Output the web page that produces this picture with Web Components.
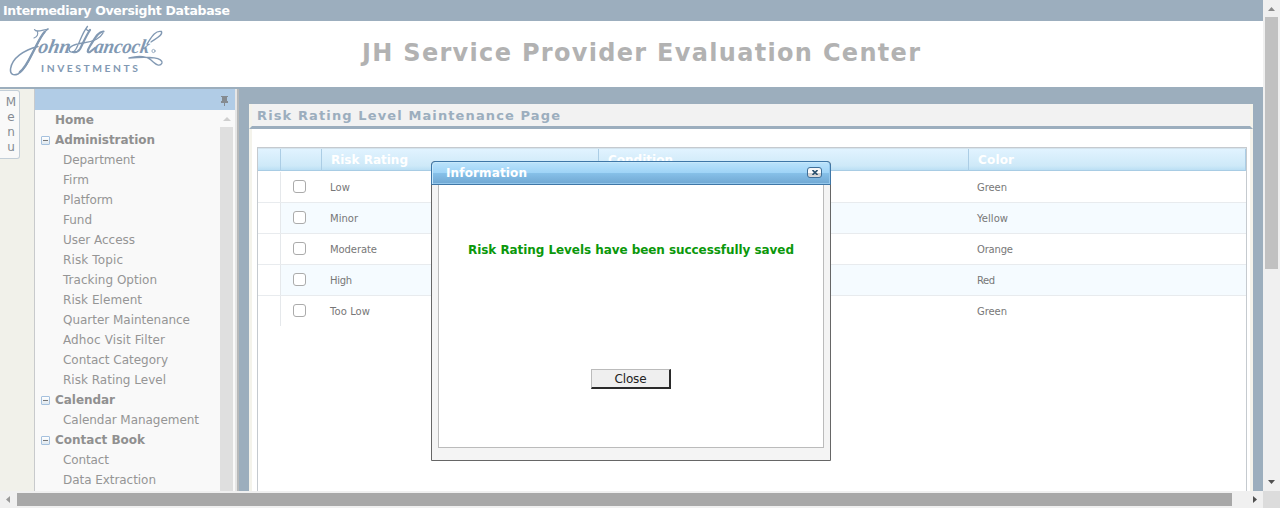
<!DOCTYPE html>
<html lang="en"><head><meta charset="utf-8"><title>Intermediary Oversight Database</title>
<style>html,body{margin:0;height:100%;overflow:hidden;background:#fff;font-family:"DejaVu Sans",sans-serif}</style></head>
<body><oversight-app></oversight-app>
<script>
const define=(name,html,setup)=>customElements.define(name,class extends HTMLElement{
  connectedCallback(){
    if(this.shadowRoot)return;
    const t=document.createElement('template');
    t.innerHTML=typeof html==='function'?html(this):html;
    this.attachShadow({mode:'open'}).append(t.content.cloneNode(true));
    if(setup)setup(this);
  }
});

/* Text spread over a given width by letter spacing */
define('fit-text','<style>:host{display:inline-block;white-space:nowrap}span{display:inline-block}</style><span><slot></slot></span>',el=>{
  const s=el.shadowRoot.querySelector('span'),w=+el.getAttribute('w'),n=el.textContent.length;
  if(w)s.style.letterSpacing=((w-s.getBoundingClientRect().width)/(n-1))+'px';
});

define('brand-logo',`<style>:host{display:block;width:156px;height:54px}svg{display:block;overflow:visible}</style>
<svg width="156" height="54" viewBox="8 24 156 54" fill="none" stroke="#8299b3" stroke-linecap="round" stroke-linejoin="round">
<g fill="#8299b3" stroke="none" font-family="Liberation Serif,serif" font-style="italic" font-weight="bold" font-size="20">
<text transform="translate(37.500 52.500) skewX(-10)" textLength="32" lengthAdjust="spacingAndGlyphs">ohn</text>
<text transform="translate(93.500 52.500) skewX(-10)" textLength="55" lengthAdjust="spacingAndGlyphs">ancock</text>
<text x="41" y="71.800" font-family="Lato,sans-serif" font-style="normal" font-weight="700" font-size="10.300" textLength="97">INVESTMENTS</text></g>
<path d="M34.500 29.500C36 33 42 30 48 29M37 31c2 3 0 6-3 7" stroke-width="1.200"/>
<path d="M48 29C42 33 39 41 35 48 29 60 25 70 18 74 13 76 10 74 10.500 69 12 58 24 50 38 46.500" stroke-width="1.500"/>
<path d="M44.500 32C40 37 36 47 32 54 28 62 24 69 20 72" stroke-width="2.400"/>
<path d="M87.500 26.500C85 28 87 32 90 30M87.500 26.500C82 33 80 42 76 49 74 53 70 53 69 50 69 46 76 44 83 43 91 42 100 39 103 33" stroke-width="1.300"/>
<path d="M90 30C86 36 83 43 80 49 78 52 75 52.500 73 52" stroke-width="2.200"/>
<path d="M103.500 31.500C98 31 94 40 90 46 87 51 87 53 90 52L95 48" stroke-width="2.200"/>
<path d="M161.500 31.500C155 30 151 38 147 44M161.500 31.500C163 35 157 38 151 42" stroke-width="1.300"/>
<path d="M129 58C138 55.500 146 56 151 60 156 65 160 67 162 63 163 58 151 56 129 58" stroke-width="1.400"/>
<circle cx="153.500" cy="51" r="1.600" stroke-width=".8"/></svg>`);

define('page-header',`<style>:host{display:block;height:89px;background:#fff;box-sizing:border-box;border-bottom:2px solid #9caebd}
.top{height:21px;background:#9caebe;color:#fff;font:bold 12.5px/21px "DejaVu Sans",sans-serif;padding-left:3px}
.row{display:flex;height:66px}brand-logo{margin:3px 0 0 8px}
h1{font:bold 24px/64px "DejaVu Sans",sans-serif;color:#b2b2b2;margin:0 0 0 198px;padding:0}</style>
<div class="top"><fit-text w="227">Intermediary Oversight Database</fit-text></div>
<div class="row"><brand-logo></brand-logo><h1><fit-text w="558">JH Service Provider Evaluation Center</fit-text></h1></div>`);

define('tree-item',el=>`<style>:host{display:flex;align-items:center;height:20px;padding-left:28px;color:#959595;font-size:12px;line-height:18px;box-sizing:border-box}
:host([head]){font-weight:bold;padding-left:6px;color:#909090}fit-text{height:20px}
i{width:9px;height:9px;box-sizing:border-box;border:1px solid #a5c1de;border-radius:1px;margin:1px 5px 0 0;background:linear-gradient(#fff,#dfe8ef);display:flex;align-items:center;justify-content:center}
i::before{content:"";width:5px;height:1px;background:#777}:host([plain]) i{visibility:hidden}</style>
${el.hasAttribute('head')?'<i></i>':''}<slot></slot>`);

const items=[['Home',39,'head plain'],['Administration',100,'head'],['Department',72],['Firm',26],['Platform',50],['Fund',29],['User Access',72],['Risk Topic',60],['Tracking Option',94],['Risk Element',79],['Quarter Maintenance',127],['Adhoc Visit Filter',102],['Contact Category',105],['Risk Rating Level',103],['Calendar',60,'head'],['Calendar Management',136],['Contact Book',90,'head'],['Contact',46],['Data Extraction',93]];
define('side-panel',`<style>:host{display:flex;width:239px;height:100%}
.tabs{width:34px;background:#f1f1ea;border-right:1px solid #c8cacc}
.tab{width:20px;height:69px;box-sizing:border-box;border:1px solid #c3ced8;border-left:0;border-radius:0 3px 3px 0;background:#f9f9f9;color:#848a92;font-size:12px;line-height:15px;text-align:center;padding:4px 0 0 3px;margin-top:1px}
.tab span{display:block}.panel{width:200px;background:#f9f9f9;overflow:hidden}
.bar{height:21px;background:#b1cce6;display:flex;justify-content:flex-end}.bar svg{margin:7px 7px 0 0}
.body{display:flex;height:calc(100% - 21px)}nav{width:185px}
.scroll{width:13px;background:#f9f9f9;display:flex;flex-direction:column;align-items:center}
.scroll svg{margin:7px 0 6px}.thumb{width:13px;flex:1;background:#dfdfdf}
.edge{width:2px;background:#e6e6e6}.edge2{width:2px;background:#b7b9ba}</style>
<div class="tabs"><div class="tab"><span>M</span><span>e</span><span>n</span><span>u</span></div></div>
<div class="panel"><div class="bar"><svg width="7" height="10"><path d="M0 0h7v1H6v4h1v2H4v3H3V7H0V5h1V1H0z" fill="#858b91"/></svg></div>
<div class="body"><nav>${items.map(([t,w,a=''])=>`<tree-item ${a}><fit-text w="${w}">${t}</fit-text></tree-item>`).join('')}</nav>
<div class="scroll"><svg width="8" height="4"><path d="M0 4 4 0l4 4z" fill="#cfcfcf"/></svg><div class="thumb"></div></div></div></div><div class="edge"></div><div class="edge2"></div>`);

define('check-box',`<style>:host{display:block;width:13px;height:13px;box-sizing:border-box;border:1px solid #ababab;border-radius:3px;background:#fff}</style>`);
const rows=[['Low',20,'Green',30],['Minor',28,'Yellow',31],['Moderate',47,'Orange',36],['High',22,'Red',18],['Too Low',40,'Green',30]];
define('rating-grid',`<style>:host{display:block;border:1px solid #c5cacf;border-bottom:0;background:#fff;box-sizing:border-box}
.h,.r{display:grid;grid-template-columns:23px 41px 277px 370px 1fr}.h div,.r div{box-sizing:border-box}
.h{height:23px;box-sizing:border-box;background:linear-gradient(#e1f3ff,#cee9f8 80%,#bbdff4);border-bottom:1px solid #a8cce4;color:#fff;font:bold 12px/22px "DejaVu Sans",sans-serif;border-top:1px solid #d4e4ee;margin-bottom:1px}
.h div{border-right:1px solid #abcde5;padding-left:9px}
.r{height:31px;grid-template-rows:30px;box-sizing:border-box;border-bottom:1px solid #e8ebee;color:#777;font-size:10px;line-height:31px}
.r:last-child{border-bottom:0}.r div{padding-left:8px}.r div:first-child{border-right:1px solid #e5e8eb;background:#fff}
.r:nth-child(even){background:#f5fbff}.r .c{padding:8px 0 0 12px}</style>
<div class="h"><div></div><div></div><div><fit-text w="77">Risk Rating</fit-text></div><div><fit-text w="65">Condition</fit-text></div><div><fit-text w="36">Color</fit-text></div></div>
${rows.map(r=>`<div class="r"><div></div><div class="c"><check-box></check-box></div><div><fit-text w="${r[1]}">${r[0]}</fit-text></div><div></div><div><fit-text w="${r[3]}">${r[2]}</fit-text></div></div>`).join('')}`);

define('main-content',`<style>:host{display:block;flex:1;background:#9caebd;padding:15px 10px 0;box-sizing:border-box;height:100%}
.page{height:100%;box-sizing:border-box;background:#fff;border:solid #f4f3eb;border-width:0 3px;display:flex;flex-direction:column}
h2{margin:0 -3px 0 -3px;height:25px;box-sizing:border-box;border-bottom:3px solid #9caebe;border-left:3px solid #f4f3eb;border-right:3px solid #f4f3eb;background:#f2f2f2;color:#9caebe;font:bold 13px/23px "DejaVu Sans",sans-serif;padding-left:5px}
rating-grid{margin:18px 3px 0 5px;flex:1}</style><div class="page"><h2><fit-text w="303">Risk Rating Level Maintenance Page</fit-text></h2><rating-grid></rating-grid></div>`);

define('info-dialog',`<style>:host{position:absolute;left:431px;top:161px;width:400px;height:300px;box-sizing:border-box;display:flex;flex-direction:column;border:1px solid #666;border-radius:4px 4px 0 0;background:#f4f4f4}
header{box-sizing:border-box;height:24px;margin:-1px -1px 0;border:1px solid #3f77a7;border-radius:4px 4px 0 0;background:linear-gradient(#bbe3fb,#9fd4f7 48%,#86c0e8 52%,#70a7d2);box-shadow:inset 1px 1px #c7e8fb,inset -1px -1px #94c7eb;display:flex;align-items:center;justify-content:space-between;padding:0 8px 0 14px;color:#fff;font:bold 12px/22px "DejaVu Sans",sans-serif}
.x{width:15px;height:11px;box-sizing:border-box;border:1px solid #3f6f98;border-radius:3px;background:linear-gradient(#f4f4f4,#fff 50%,#ccc 52%,#ddd);display:flex;align-items:center;justify-content:center;margin-bottom:1px}
.b{flex:1;margin:0 6px 12px;border:1px solid #bbb;border-top:0;background:#fff;display:flex;flex-direction:column;align-items:center}
p{margin:55px 0 0;font:bold 12px/20px "DejaVu Sans",sans-serif;color:#0b980b}
button{margin:109px 0 0;width:80px;height:20px;padding:0;border:solid #2a2a2a;border-width:1px 2px 2px 1px;border-color:#bbb #2a2a2a #2a2a2a #bbb;background:#efefef;color:#222;font:12px/16px "DejaVu Sans",sans-serif}</style>
<header><fit-text w="81">Information</fit-text><span class="x"><svg width="6" height="5"><path d="M.5 0 5.500 5M5.500 0 .5 5" stroke="#2d536f" stroke-width="1.600"/></svg></span></header>
<div class="b"><p><fit-text w="326">Risk Rating Levels have been successfully saved</fit-text></p><button><fit-text w="32">Close</fit-text></button></div>`);

define('scroll-right',`<style>:host{display:flex;flex-direction:column;align-items:center;background:#f0f0f0}svg{margin:7px 0 6px}.t{width:13px;height:252px;background:#c1c1c1}.d{margin:auto 0 7px}</style><svg width="7" height="4"><path d="M0 4 3.500 0 7 4z" fill="#8a8a8a"/></svg><div class="t"></div><svg class="d" width="7" height="4"><path d="M0 0h7L3.500 4z" fill="#505050"/></svg>`);
define('scroll-bottom',`<style>:host{display:flex;align-items:center;background:#f0f0f0}svg{margin:0 7px 0 6px}.t{height:13px;width:1215px;background:#a8a8a8}.d{margin:0 6px 0 auto}</style><svg width="4" height="7"><path d="M4 0v7L0 3.500z" fill="#999"/></svg><div class="t"></div><svg class="d" width="4" height="7"><path d="M0 0v7l4-3.500z" fill="#505050"/></svg>`);

define('oversight-app',`<style>:host{display:grid;grid-template:491px 17px/1263px 17px;width:1280px;height:508px;position:relative}
.v{display:flex;flex-direction:column;overflow:hidden}.m{display:flex;height:402px}.corner{background:#dcdcdc}</style>
<div class="v"><page-header></page-header><div class="m"><side-panel></side-panel><main-content></main-content></div></div><scroll-right></scroll-right><scroll-bottom></scroll-bottom><div class="corner"></div><info-dialog></info-dialog>`);
</script></body></html>
